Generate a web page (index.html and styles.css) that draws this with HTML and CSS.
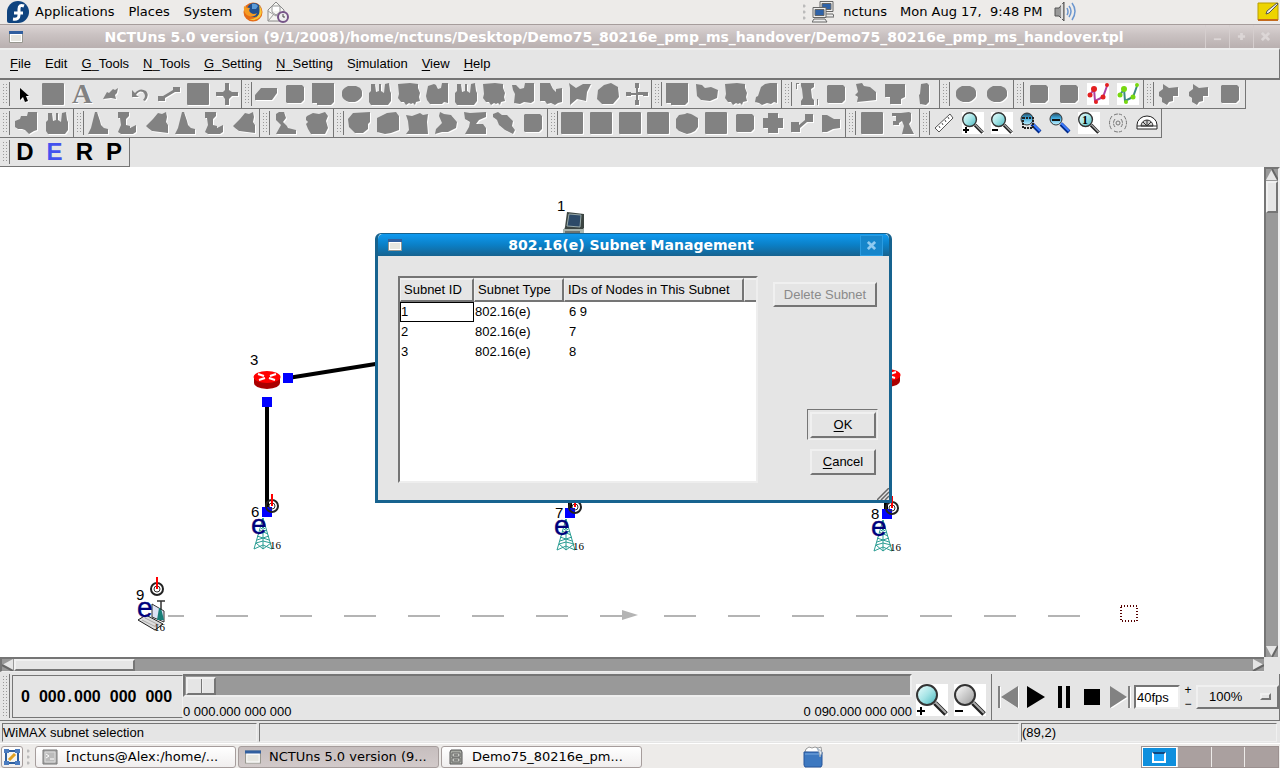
FILE: index.html
```html
<!DOCTYPE html>
<html lang="en">
<head>
<meta charset="utf-8">
<title>NCTUns 5.0</title>
<link rel="stylesheet" href="styles.css">
</head>
<body>
<svg class="defs" aria-hidden="true">
  <defs>
    <linearGradient id="glass" x1="0" y1="0" x2="1" y2="1"><stop offset="0" stop-color="#f0ffff"/><stop offset=".5" stop-color="#a5e4e6"/><stop offset="1" stop-color="#45b4bb"/></linearGradient>
    <linearGradient id="glassgray" x1="0" y1="0" x2="1" y2="1"><stop offset="0" stop-color="#fff"/><stop offset=".5" stop-color="#ccc"/><stop offset="1" stop-color="#999"/></linearGradient>
    <linearGradient id="glassblue" x1="0" y1="0" x2="0" y2="1"><stop offset="0" stop-color="#27485c"/><stop offset=".4" stop-color="#3ba4d8"/><stop offset="1" stop-color="#c5f4ff"/></linearGradient>
  </defs>
  <symbol id="sq" viewBox="0 0 22 22"><rect width="22" height="22" rx="1"/></symbol>
  <symbol id="sm" viewBox="0 0 22 22"><path d="M2 3l1-1h15l2 2v13l-3 3H3l-1-1z"/></symbol>
  <symbol id="arrow" viewBox="0 0 22 22"><path fill="#000" d="M7 5v12l3-3 2 5 3-1-2-5h3z"/></symbol>
  <symbol id="pencil" viewBox="0 0 22 22"><path d="M3 16l4-7 2 1 4-4 2 1 3-2-1 5-2 2 1 4-5-1z"/></symbol>
  <symbol id="undo" viewBox="0 0 22 22"><path d="M3 7v7h7l-3-2q3-5 7-3 4 4 0 8l2 1q5-6 1-10-6-4-11 2z"/></symbol>
  <symbol id="link" viewBox="0 0 22 22"><path d="M0 13h5l10-6V4h7v5h-5L7 15v3H0z"/></symbol>
  <symbol id="cross" viewBox="0 0 22 22"><path d="M9 0h4v7l3 2h6v4h-6l-3 3v6H9v-6l-2-3H0V9h7l2-2z"/></symbol>
  <symbol id="thin" viewBox="0 0 22 22"><path d="M9 0h4v5h-1v4h5V9h5v4h-5v-1h-5v5h1v5H9v-5h1v-5H5v1H0V9h5v1h5V5H9z"/></symbol>
  <symbol id="para" viewBox="0 0 22 22"><path d="M0 17v-5l6-7h16v5l-5 7z"/></symbol>
  <symbol id="block" viewBox="0 0 22 22"><path d="M0 1h4V0h15v1h3v15l-3 1v5H6v-5H1z"/></symbol>
  <symbol id="ell" viewBox="0 0 22 22"><path d="M1 9q0-3 6-6h8q6 2 6 6v4q-2 4-7 6H8q-6-2-7-6z"/></symbol>
  <symbol id="full" viewBox="0 0 22 22"><path d="M0 0h22v19l-3 3H5v-2H0z"/></symbol>
  <symbol id="fact" viewBox="0 0 22 22"><path d="M0 10l2-2V1h4l1 8 3-1V1h2v7l3 2 1-9 4-1 1 8 1 2v8l-3 4H2l-2-3z"/></symbol>
  <symbol id="rag" viewBox="0 0 22 22"><path d="M0 1l12-1 8 1v4l2 5-1 4 1 4-4 1-1 3-2-2-2 1-2-1-3 2-2-3H3l-3-4 1-4z"/></symbol>
  <symbol id="notch" viewBox="0 0 22 22"><path d="M2 3l6-2 2 1 2 4 3-1 1-5h6v20l-4-1-2 2H4l-3-4-1-4z"/></symbol>
  <symbol id="notchl" viewBox="0 0 22 22"><path d="M0 2h4l4 4 4-1 1-5h9v18l-3 2-7-1-4 2-6-1 1-9-2-4z"/></symbol>
  <symbol id="notchr" viewBox="0 0 22 22"><path d="M0 0h10l3 6 3 3v-3l6-1v14l-4 1-3 2-4-2-4 1-2-3H0z"/></symbol>
  <symbol id="em" viewBox="0 0 22 22"><path d="M0 0l7 5 7-4h8l-4 8-1 9-9-2-7 6V5z"/></symbol>
  <symbol id="circ" viewBox="0 0 22 22"><path d="M7 2l7-2 7 4 1 10-6 7H5l-5-5 1-9z"/></symbol>
  <symbol id="bean" viewBox="0 0 22 22"><path d="M0 1l6 1 3 3 6-1 7 3-1 8-7 3-9-1-4-4z"/></symbol>
  <symbol id="round" viewBox="0 0 22 22"><path d="M6 4l4-3 5-1h7v20l-3-1-3 2-4-1-5 2-3-2-4-1 1-5 2-1z"/></symbol>
  <symbol id="roller" viewBox="0 0 22 22"><path d="M0 1h3V0H0zM0 1h1v5H0zM5 0h13v4l-3 2 1 9 2 2v5H5v-4l2-3-1-9-1-3zM21 16h1v6h-1z"/></symbol>
  <symbol id="pot" viewBox="0 0 22 22"><path d="M1 1l6-1 2 3 6 1 6 5v8l-9 1-10 1 1-5-3-2 3-3z"/></symbol>
  <symbol id="tee" viewBox="0 0 22 22"><path d="M1 1h20v13l-4 2v5H6v-7H1z"/></symbol>
  <symbol id="slim" viewBox="0 0 22 22"><path d="M8 1l6-1 2 2v17l-3 3-6-1-1-9 1-1z"/></symbol>
  <symbol id="splat" viewBox="0 0 22 22"><path d="M1 9l4-3V1l6 4 9-1v9h-5v5l-4 1-2 3-5-3v-4l-3-2z"/></symbol>
  <symbol id="flag" viewBox="0 0 22 22"><path d="M0 9l5-2 1-3h6l1-4h9v18l-3 1-5 3-4-4-3-1H3l-3-2z"/></symbol>
  <symbol id="cone" viewBox="0 0 22 22"><path d="M7 0h2l3 9 1 4 3 3 4 1v5H0l3-6z"/></symbol>
  <symbol id="ped" viewBox="0 0 22 22"><path d="M1 0h11v4l-3 3v6l4 1v2l6-3v7l-3 2H4l-3-2 3-7-1-7H1z"/></symbol>
  <symbol id="fan" viewBox="0 0 22 22"><path d="M0 14l7-7 5-6 4 1 4-2 1 5-1 5 2 3v8l-8-1-8-1-4-3z"/></symbol>
  <symbol id="lamp" viewBox="0 0 22 22"><path d="M4 0h5l2 6-3 4 4 4 1 2 8 2v4H1l5-9-5-5V2z"/></symbol>
  <symbol id="crown" viewBox="0 0 22 22"><path d="M1 4l6-3 6 1 6-2 3 4-2 5 2 7-3 6H5l-3-5-2-5 2-2-3-3z"/></symbol>
  <symbol id="shield" viewBox="0 0 22 22"><path d="M0 7l5-6 17-1v10l-2 2v5l-5 4H7l-6-6z"/></symbol>
  <symbol id="hex" viewBox="0 0 22 22"><path d="M0 6l10-5 9-1 3 4v14l-8 3-6 1-8-2z"/></symbol>
  <symbol id="jag" viewBox="0 0 22 22"><path d="M0 3l6 1 8-3 3 2 5-1-1 8 1 12H0l3-4-1-9z"/></symbol>
  <symbol id="chev" viewBox="0 0 22 22"><path d="M5 0l4 2 7 1 6 7-1 6-8 4H7l-7 2 1-5 6-6-3-7z"/></symbol>
  <symbol id="zed" viewBox="0 0 22 22"><path d="M0 0l6 1 16-1v5l-7 3-3 4h7l3 4v6H1l4-7 1-5-5-3z"/></symbol>
  <symbol id="slug" viewBox="0 0 22 22"><path d="M0 2l5-2 4 3h5l6 6-1 5 3 4-2 4-8-4-6-5-2-5-4-3z"/></symbol>
  <symbol id="gear" viewBox="0 0 22 22"><path d="M3 3l6-1 2-1 4 1 2 1 5 3v9l-3 4-4 2-4 1-3-1-5-2-3-3V7z"/></symbol>
  <symbol id="plus" viewBox="0 0 22 22"><path d="M6 1h10v5h5v10h-5v5H6v-5H1V6h5z"/></symbol>
  <symbol id="zig" viewBox="0 0 22 22"><path d="M0 10h8v3l6-5V2h8v8h-6l-7 6v4H0z"/></symbol>
  <symbol id="horn" viewBox="0 0 22 22"><path d="M2 3h5l7 4h6v9l-7 1-6 3H2z"/></symbol>
  <symbol id="tripod" viewBox="0 0 22 22"><path d="M0 1h9l8-1 2 1v8l-2 3 5 10H10l2-8-2-5-3 2v2H1V9h3V4H0z"/></symbol>
  <symbol id="mag" viewBox="0 0 32 32"><path fill="#fff" d="M0 0h32v32H0z"/><path d="M19 19l11 11" stroke="#222" stroke-width="5"/><path d="M19 18l11 11" stroke="#aaa" stroke-width="2"/><circle cx="11" cy="11" r="10" fill="url(#glass)" stroke="#333" stroke-width="2"/></symbol>
  <symbol id="maggray" viewBox="0 0 32 32"><path fill="#fff" d="M0 0h32v32H0z"/><path d="M19 19l11 11" stroke="#222" stroke-width="5"/><path d="M19 18l11 11" stroke="#aaa" stroke-width="2"/><circle cx="11" cy="11" r="10" fill="url(#glassgray)" stroke="#333" stroke-width="2"/></symbol>
  <symbol id="magblue" viewBox="0 0 22 22"><path d="M12 12l8 8" stroke="#002a8a" stroke-width="4"/><path d="M12 11l8 8" stroke="#3d7cff" stroke-width="2"/><circle cx="7" cy="7" r="6" fill="url(#glassblue)" stroke="#333"/></symbol>
  <symbol id="win" viewBox="0 0 14 12"><path fill="#fff" stroke="#999890" d="M.5.5h13v11H.5z"/><path fill="#e6e6e0" d="M2 4h10v6H2z"/><path fill="#315f9f" d="M0 0h14v3H0z"/></symbol>
</svg>

<header class="panel">
  <svg class="logo" viewBox="0 0 22 22" aria-label="Fedora"><path fill="#10447f" d="M11 0a11 11 0 1 1 0 22H2q-2 0-2-2v-9A11 11 0 0 1 11 0z"/><path d="M17 5q-5-2-5 3v6q0 5-6 4M7 12h9" fill="none" stroke="#fff" stroke-width="3"/></svg>
  <nav class="panel-menu"><a href="#">Applications</a><a href="#">Places</a><a href="#">System</a></nav>
  <svg class="ico20" viewBox="0 0 20 20" aria-label="Firefox"><circle cx="10" cy="10" r="9.5" fill="#e56a15"/><circle cx="11" cy="8" r="7" fill="#22508e"/><path d="M9 2q4-1 6 2l-2 3-4 0z" fill="#5b9bd8"/><path d="M1 4q2 2 6 2-2 3 1 5 3 2 6 0-2 5-8 3-6-2-5-10z" fill="#f59a22"/><path d="M16 3q5 6 1 12-5 5-11 2 8 0 10-5 1-4 0-9z" fill="#f7c63a"/></svg>
  <svg class="ico22" viewBox="0 0 22 22" aria-label="Mail"><path d="M1 9l8-8 8 8v11H1z" fill="#f5f5f2" stroke="#888"/><path d="M1 10l8 5 8-5M1 20l6-7M5 5h8v6l-4 3-4-3z" fill="#fff" stroke="#999"/><circle cx="16" cy="16" r="5" fill="#eee" stroke="#765488" stroke-width="2"/><path d="M16 13v3h2" stroke="#444" fill="none"/></svg>
  <span class="grow"></span>
  <i class="dots"></i>
  <svg class="ico22 net" viewBox="0 0 22 22" aria-label="Network"><g stroke="#666"><path fill="#eee" d="M8 .5h13v10H8zM10 13h11l1 3H10z"/><path fill="#2e62a8" d="M10 2.500h9v6h-9z"/><path fill="#eee" d="M1 6.500h13v10H1zM2 18h11l2 3H0z"/><path fill="#2e62a8" d="M3 8.500h9v6H3z"/></g></svg>
  <span class="user">nctuns</span>
  <time class="clock">Mon Aug 17,&nbsp; 9:48 PM</time>
  <svg class="ico22" viewBox="0 0 22 22" aria-label="Volume"><path d="M1 7h4l5-6v19l-5-5H1z" fill="#999" stroke="#555"/><path d="M8 3v15" stroke="#ddd" stroke-width="2"/><path d="M13 7q2 4 0 7M15 5q4 5 0 11M18 2q6 8 0 17" fill="none" stroke="#6b96cf" stroke-width="1.500"/></svg>
  <span class="grow2"></span>
  <svg class="ico22 note" viewBox="0 0 22 20" aria-label="Notes"><path d="M1 1h20v17H1z" fill="#edd400" stroke="#b99d00"/><path d="M1 17h20v2H1z" fill="#c46a1d"/><path d="M9 12l1-3 10-8 1 1-9 9z" fill="#eee" stroke="#555"/></svg>
</header>

<div class="titlebar">
  <svg class="winico" viewBox="0 0 14 12"><use href="#win"/></svg>
  <h1>NCTUns 5.0 version (9/1/2008)/home/nctuns/Desktop/Demo75_80216e_pmp_ms_handover/Demo75_80216e_pmp_ms_handover.tpl</h1>
  <div class="wbtns">
    <button aria-label="Minimize"><svg viewBox="0 0 10 10"><path d="M1 8h8" stroke-width="2"/></svg></button>
    <button aria-label="Maximize"><svg viewBox="0 0 10 10"><path d="M5 1v8M1 5h8" stroke-width="3"/></svg></button>
    <button aria-label="Close"><svg viewBox="0 0 10 10"><path d="M1 1l8 8M9 1L1 9" stroke-width="3"/></svg></button>
  </div>
</div>

<nav class="menubar">
  <a href="#"><u>F</u>ile</a><a href="#">Edit</a><a href="#"><u>G</u>_Tools</a><a href="#"><u>N</u>_Tools</a><a href="#"><u>G</u>_Setting</a><a href="#"><u>N</u>_Setting</a><a href="#">S<u>i</u>mulation</a><a href="#"><u>V</u>iew</a><a href="#"><u>H</u>elp</a>
</nav>

<div class="toolbar">
  <div class="tg n8"><i class="grip"></i>
    <button><svg><use href="#arrow"/></svg></button><button><svg><use href="#sq"/></svg></button><button class="letter-a">A</button><button><svg><use href="#pencil"/></svg></button><button><svg><use href="#undo"/></svg></button><button><svg><use href="#link"/></svg></button><button><svg><use href="#sq"/></svg></button><button><svg><use href="#cross"/></svg></button></div>
  <div class="tg n14"><i class="grip"></i>
    <button><svg><use href="#para"/></svg></button><button><svg><use href="#sm"/></svg></button><button><svg><use href="#full"/></svg></button><button><svg><use href="#ell"/></svg></button><button><svg><use href="#fact"/></svg></button><button><svg><use href="#rag"/></svg></button><button><svg><use href="#notch"/></svg></button><button><svg><use href="#fact"/></svg></button><button><svg><use href="#rag"/></svg></button><button><svg><use href="#notchl"/></svg></button><button><svg><use href="#notchr"/></svg></button><button><svg><use href="#em"/></svg></button><button><svg><use href="#circ"/></svg></button><button><svg><use href="#thin"/></svg></button></div>
  <div class="tg n4"><i class="grip"></i>
    <button><svg><use href="#full"/></svg></button><button><svg><use href="#bean"/></svg></button><button><svg><use href="#rag"/></svg></button><button><svg><use href="#round"/></svg></button></div>
  <div class="tg n5"><i class="grip"></i>
    <button><svg><use href="#roller"/></svg></button><button><svg><use href="#sm"/></svg></button><button><svg><use href="#pot"/></svg></button><button><svg><use href="#tee"/></svg></button><button><svg><use href="#slim"/></svg></button></div>
  <div class="tg n2"><i class="grip"></i>
    <button><svg><use href="#ell"/></svg></button><button><svg><use href="#ell"/></svg></button></div>
  <div class="tg n4"><i class="grip"></i>
    <button><svg><use href="#sm"/></svg></button><button><svg><use href="#sm"/></svg></button>
    <button><svg class="plain" viewBox="0 0 22 22"><path fill="#fff" d="M0 0h22v22H0z"/><path d="M3 12l4-6 1 12 8-4 4-11" fill="none" stroke="#b040a0" stroke-width="2"/><g fill="#e32020"><circle cx="7" cy="6" r="3"/><circle cx="3" cy="12" r="2.500"/><circle cx="9" cy="19" r="2"/><circle cx="16" cy="14" r="2.500"/><circle cx="20" cy="2" r="2"/></g></svg></button>
    <button><svg class="plain" viewBox="0 0 22 22"><path fill="#fff" d="M0 0h22v22H0z"/><path d="M3 12l4-6 1 12 8-4 4-11" fill="none" stroke="#3d8a80" stroke-width="2"/><g fill="#78d810"><circle cx="7" cy="6" r="3"/><circle cx="3" cy="12" r="2.500"/><circle cx="9" cy="19" r="2"/><circle cx="16" cy="14" r="2.500"/><circle cx="20" cy="2" r="2"/></g></svg></button></div>
  <div class="tg n3"><i class="grip"></i>
    <button><svg><use href="#splat"/></svg></button><button><svg><use href="#splat"/></svg></button><button><svg><use href="#sm"/></svg></button></div>
</div>

<div class="toolbar">
  <div class="tg n2"><i class="grip"></i>
    <button><svg><use href="#flag"/></svg></button><button><svg><use href="#fact"/></svg></button></div>
  <div class="tg n6"><i class="grip"></i>
    <button><svg><use href="#cone"/></svg></button><button><svg><use href="#ped"/></svg></button><button><svg><use href="#fan"/></svg></button><button><svg><use href="#cone"/></svg></button><button><svg><use href="#ped"/></svg></button><button><svg><use href="#fan"/></svg></button></div>
  <div class="tg n2"><i class="grip"></i>
    <button><svg><use href="#lamp"/></svg></button><button><svg><use href="#crown"/></svg></button></div>
  <div class="tg n7"><i class="grip"></i>
    <button><svg><use href="#shield"/></svg></button><button><svg><use href="#hex"/></svg></button><button><svg><use href="#jag"/></svg></button><button><svg><use href="#chev"/></svg></button><button><svg><use href="#zed"/></svg></button><button><svg><use href="#slug"/></svg></button><button><svg><use href="#sm"/></svg></button></div>
  <div class="tg n10"><i class="grip"></i>
    <button><svg><use href="#sq"/></svg></button><button><svg><use href="#sq"/></svg></button><button><svg><use href="#sq"/></svg></button><button><svg><use href="#sq"/></svg></button><button><svg><use href="#gear"/></svg></button><button><svg><use href="#sq"/></svg></button><button><svg><use href="#sm"/></svg></button><button><svg><use href="#plus"/></svg></button><button><svg><use href="#zig"/></svg></button><button><svg><use href="#horn"/></svg></button></div>
  <div class="tg n2"><i class="grip"></i>
    <button><svg><use href="#sq"/></svg></button><button><svg><use href="#tripod"/></svg></button></div>
  <div class="tg n8"><i class="grip"></i>
    <button><svg class="plain" viewBox="0 0 22 22"><path d="M2 16L17 2l3 4L6 20z" fill="#fff" stroke="#555"/><path d="M6 14l1 2M9 11l1 2M12 8l1 2M15 5l1 2" stroke="#555"/></svg></button>
    <button><svg class="plain" viewBox="0 0 22 22"><use href="#mag"/><path d="M1 18h6M4 15v6" stroke="#000" stroke-width="2"/></svg></button>
    <button><svg class="plain" viewBox="0 0 22 22"><use href="#mag"/><path d="M1 18h6" stroke="#000" stroke-width="2"/></svg></button>
    <button><svg class="plain" viewBox="0 0 22 22"><use href="#magblue"/><path d="M3 6h10v10H3z" fill="none" stroke="#222" stroke-width="2" stroke-dasharray="2 1"/></svg></button>
    <button><svg class="plain" viewBox="0 0 22 22"><use href="#magblue"/><path d="M3 8h8" stroke="#111" stroke-width="2"/></svg></button>
    <button><svg class="plain" viewBox="0 0 22 22"><use href="#mag"/><text x="4" y="12" class="one">1</text></svg></button>
    <button><svg class="plain" viewBox="0 0 22 22"><g fill="none" stroke="#777"><path d="M5 4q-5 7 0 14M8 7q-3 4 0 8M17 4q5 7 0 14M14 7q3 4 0 8M7 3q4-2 8 0M7 19q4 2 8 0" stroke-dasharray="4 1"/><circle cx="11" cy="11" r="2"/></g></svg></button>
    <button><svg class="plain" viewBox="0 0 22 22"><path d="M1 17V13A10 9 0 0 1 21 13v4z" fill="#fff" stroke="#222"/><path d="M5 14a6 6 0 0 1 12 0z" fill="#ccc" stroke="#333"/><path d="M11 14V8M11 14L7 10M11 14l4-4M1 14h20" stroke="#333"/></svg></button></div>
</div>

<div class="toolbar">
  <div class="tg n4 modes"><i class="grip"></i><button>D</button><button class="on">E</button><button>R</button><button>P</button></div>
</div>

<main class="workspace">
  <div class="canvas">
    <svg class="net-canvas" viewBox="0 167 1264 490" width="1264" height="490">
      <g stroke="#000" stroke-width="4"><path d="M288 378l100-16M267 402v108M570 440v73M886 440v74"/></g>
      <g fill="#00f"><path d="M283 373h10v10h-10zM262 397h10v10h-10z"/></g>
      <g id="router"><path d="M254 378v5q0 5 13 6 13-1 13-6v-5z" fill="#a00"/><ellipse cx="267" cy="377" rx="13.500" ry="6" fill="#f00"/><path d="M258 374l6 2M276 374l-6 2M259 380l6-2M275 380l-6-2" stroke="#fff" stroke-width="2"/></g>
      <use href="#router" x="620" y="-2"/>
      <g id="station">
        <path d="M262 507h10v10h-10z" fill="#00f"/>
        <circle cx="272" cy="506" r="6" fill="none" stroke="#222" stroke-width="2"/><circle cx="272" cy="506" r="3" fill="none" stroke="#333"/><path d="M272 494v12" stroke="#f00" stroke-width="2"/>
        <path d="M263 518l-9 31M263 518l9 31M263 518v31M261 525l4 4M265 525l-4 4M259 530l9 4M267 530l-9 4M257 536l12 4M269 536l-12 4M256 543l7 6 8-6-8-2zM254 549l9-4 9 4" fill="none" stroke="#2a9d93"/>
        <text class="e" x="251" y="534">e</text><text class="sixteen" x="270" y="549">16</text>
      </g>
      <use href="#station" x="303" y="1"/><use href="#station" x="620" y="2"/>
      <g class="id"><text x="557" y="211">1</text><text x="250" y="365">3</text><text x="251" y="517">6</text><text x="555" y="518">7</text><text x="871" y="519">8</text><text x="136" y="600">9</text></g>
      <g><path d="M567 212l17 2v14l-4 5h-17l2-6z" fill="#3c4542"/><path d="M569 214l12 1-1 12-13-1z" fill="#2d4a68" stroke="#9aa"/><path d="M563 229h21v8h-21z" fill="#a9b5af"/><path d="M565 232h15" stroke="#333"/></g>
      <g><circle cx="157" cy="589" r="6" fill="none" stroke="#222" stroke-width="2"/><circle cx="157" cy="589" r="3" fill="none" stroke="#333"/><path d="M157 577v12" stroke="#f00" stroke-width="2"/>
      <path d="M152 604l12 7v11l-12-5z" fill="#dde3f5" stroke="#333"/><path d="M138 620l8-5 17 9-8 6z" fill="#ddd" stroke="#222"/><path d="M142 620l14 7M145 618l14 7" stroke="#aaa"/><path d="M159 608l-2 12h7l-3-12z" fill="#187f78"/><path d="M161 601v9M157 601h8" stroke="#333" stroke-width="1.500"/>
      <text class="e" x="137" y="617">e</text><text class="sixteen" x="154" y="631">16</text></g>
      <path d="M168 616h16M216 616h864" stroke="#b4b4b4" stroke-width="2" stroke-dasharray="32 32"/>
      <path d="M622 610l16 5-16 5z" fill="#b4b4b4"/>
      <rect x="1121" y="606" width="16" height="15" fill="none" stroke="#500" stroke-width="2" stroke-dasharray="1 2"/>
    </svg>
  </div>
  <div class="vscroll">
    <svg class="sarrow" viewBox="0 0 12 12"><path d="M6 0L0 11h12z"/><path class="shade" d="M6 0l6 11"/></svg>
    <div class="thumb"></div><span class="grow"></span>
    <svg class="sarrow" viewBox="0 0 12 12"><path d="M6 12L0 1h12z"/><path class="shade" d="M6 12l6-11"/></svg>
  </div>
  <div class="hscroll">
    <svg class="sarrow" viewBox="0 0 12 12"><path d="M0 6L11 0v12z"/><path class="shade" d="M0 6l11 6"/></svg>
    <div class="thumb"></div><span class="grow"></span>
    <svg class="sarrow" viewBox="0 0 12 12"><path d="M12 6L1 0v12z"/><path class="shade" d="M12 6L1 12"/></svg>
  </div>

  <section class="dialog" role="dialog" aria-labelledby="dt">
    <div class="dtitle">
      <svg class="winico" viewBox="0 0 14 12"><use href="#win"/></svg><h2 id="dt">802.16(e) Subnet Management</h2>
      <button aria-label="Close dialog"><svg viewBox="0 0 10 10"><path d="M1 1l8 8M9 1L1 9" stroke-width="3"/></svg></button>
    </div>
    <div class="dbody">
      <div class="tablebox">
        <table>
          <colgroup><col class="c1"><col class="c2"><col class="c3"><col></colgroup>
          <thead><tr><th>Subnet ID</th><th>Subnet Type</th><th>IDs of Nodes in This Subnet</th><th></th></tr></thead>
          <tbody>
            <tr><td class="cur">1</td><td>802.16(e)</td><td>6 9</td><td></td></tr>
            <tr><td>2</td><td>802.16(e)</td><td>7</td><td></td></tr>
            <tr><td>3</td><td>802.16(e)</td><td>8</td><td></td></tr>
          </tbody>
        </table>
      </div>
      <div class="dside">
        <button class="btn" disabled>Delete Subnet</button>
        <span class="grow"></span>
        <span class="default"><button class="btn small"><u>O</u>K</button></span>
        <button class="btn small cancel"><u>C</u>ancel</button>
      </div>
    </div>
    <svg class="sizegrip" viewBox="0 0 12 12"><path d="M0 12L12 0M4 12l8-8M8 12l4-4" stroke="#666" stroke-width="1.500"/></svg>
  </section>
</main>

<footer class="player">
  <i class="grip"></i>
  <output class="lcd"><span>0</span><span>000</span><span class="pt">.</span><span>000</span><span>000</span><span>000</span></output>
  <div class="timeline">
    <input type="range" min="0" max="90" value="0" aria-label="Time">
    <div class="times"><span>0 000.000 000 000</span><span>0 090.000 000 000</span></div>
  </div>
  <div class="zooms">
    <button aria-label="Zoom in time"><svg viewBox="0 0 32 32"><use href="#mag"/><path d="M1 27h8M5 23v8" stroke="#000" stroke-width="2"/></svg></button>
    <button aria-label="Zoom out time"><svg viewBox="0 0 32 32"><use href="#maggray"/><path d="M1 27h8" stroke="#000" stroke-width="2"/></svg></button>
  </div>
  <div class="controls">
    <button aria-label="First"><svg viewBox="0 0 22 22"><path class="dis" d="M1 0h2v22H1zM21 0v22L4 11z"/></svg></button>
    <button aria-label="Play"><svg viewBox="0 0 22 22"><path d="M2 0v22l18-11z"/></svg></button>
    <button aria-label="Pause"><svg viewBox="0 0 22 22"><path d="M5 0h4v22H5zM13 0h4v22h-4z"/></svg></button>
    <button aria-label="Stop"><svg viewBox="0 0 22 22"><path d="M3 3h16v16H3z"/></svg></button>
    <button aria-label="Last"><svg viewBox="0 0 22 22"><path class="dis" d="M19 0h2v22h-2zM1 0v22l17-11z"/></svg></button>
    <input class="fps" value="40fps" aria-label="Frame rate">
    <span class="spin"><button>+</button><button>−</button></span>
    <span class="selwrap"><select aria-label="Speed"><option>100%</option></select><i></i></span>
  </div>
</footer>

<div class="status"><span class="s1">WiMAX subnet selection</span><span class="s2"></span><span class="s3">(89,2)</span></div>

<footer class="taskbar">
  <button class="task desk" aria-label="Show desktop"><svg class="ico16" viewBox="0 0 16 16"><path fill="#f4f4f0" stroke="#2e5f9f" stroke-width="2" d="M2 2h12v12H2z"/><path d="M0 0h5v4H0zM11 0h5v4h-5zM0 12h5v4H0zM11 12h5v4h-5z" fill="#4b7cc0"/><path d="M5 11l6-6" stroke="#e0a020" stroke-width="3"/></svg></button>
  <i class="dots"></i>
  <button class="task"><svg class="ico16" viewBox="0 0 16 16"><path fill="#aaa" stroke="#777" d="M1 1h14v14H1z"/><path fill="#bbb" stroke="#ddd" d="M3 3h10v10H3z"/><path d="M4 5l3 2-3 2M8 10h4" stroke="#fff" fill="none"/></svg><span>[nctuns@Alex:/home/...</span></button>
  <button class="task active"><svg class="ico16" viewBox="0 -1 14 14"><use href="#win" width="14" height="12"/></svg><span>NCTUns 5.0 version (9...</span></button>
  <button class="task"><svg class="ico16" viewBox="0 0 16 16"><path fill="#a7aaa3" stroke="#555" d="M2 3l1-2h10l1 2v12H2z"/><path fill="#c8cac4" stroke="#666" d="M4 4h8v4H4zM4 9h8v4H4z"/><path d="M6 6h4M6 11h4" stroke="#444"/></svg><span>Demo75_80216e_pm...</span></button>
  <span class="grow"></span>
  <svg class="ico22" viewBox="0 0 22 22" aria-label="Files"><path d="M3 6l1-3 3-2 3 1 3-1 3 1 3-1 1 7z" fill="#fff" stroke="#999"/><path d="M2 6h18v13l-1 2H3l-1-2z" fill="#3d78c0" stroke="#27549a"/><path d="M3 8h15" stroke="#7ba9e0"/><path d="M15 2l5 4-2 5-1-5z" fill="#e9edf3" stroke="#9ab"/></svg>
  <span class="grow double"></span>
  <div class="pager"><button class="here" aria-label="Workspace 1"><i></i></button><button aria-label="Workspace 2"></button><button aria-label="Workspace 3"></button><button aria-label="Workspace 4"></button></div>
</footer>
</body>
</html>
```

FILE: styles.css
```css
* { box-sizing: border-box; }
body {
  margin: 0; min-height: 100vh; display: flex; flex-direction: column;
  background: #e5e5e5; color: #000;
  font: 13px/16px "Liberation Sans", Arial, sans-serif;
}
button { margin: 0; padding: 0; border: 0; background: none; font: inherit; color: inherit; }
a { color: inherit; text-decoration: none; }
svg { display: block; flex: none; }
u { text-underline-offset: 2px; }
.defs { position: absolute; width: 0; height: 0; }
.grow { flex: 1; }
.double { flex: 2; }
.ico16 { width: 16px; height: 16px; }
.ico20 { width: 20px; height: 20px; }
.ico22 { width: 22px; height: 22px; }
.dots { width: 3px; height: 16px; flex: none; background: radial-gradient(circle at 1px 2px, #bbb 1px, transparent 2px) 0 0 / 3px 6px; }

/* desktop panel */
.panel {
  display: flex; align-items: center; height: 25px; padding: 0 1px 1px 7px;
  background: #edebe9; border-bottom: 1px solid #a69d9c;
  font-family: "DejaVu Sans", sans-serif;
}
.logo { width: 22px; height: 22px; margin-right: 6px; }
.panel-menu { display: flex; gap: 14px; margin-right: 11px; }
.panel .ico20 { margin-right: 4px; }
.panel .net { margin: 0 9px 0 6px; }
.user { margin-right: 13px; }
.clock { margin-right: 12px; }
.grow2 { width: 14.2%; flex: none; }
.note { height: 20px; }

/* window title */
.titlebar {
  display: flex; align-items: center; height: 23px; padding-left: 9px;
  background: linear-gradient(#dbd4d4, #cbc3c3 40%, #b9b0b0);
  font-family: "DejaVu Sans", sans-serif;
}
.winico { width: 14px; height: 12px; }
h1, h2 { margin: 0; flex: 1; text-align: center; font: bold 14px/20px "DejaVu Sans", sans-serif; color: #fff; white-space: nowrap; }
.wbtns { display: flex; align-self: stretch; width: 75px; }
.wbtns button { width: 24px; border-left: 1px solid #d5cece; display: grid; place-items: center; }
.wbtns svg, .dtitle button svg { width: 9px; height: 9px; stroke: #dcd6d6; fill: none; }

/* menu */
.menubar {
  display: flex; align-items: center; gap: 14px; height: 32px; padding: 0 10px;
  border-top: 2px solid #eee; border-right: 1px solid #757575; border-bottom: 2px solid #757575;
}

/* tool bars */
.toolbar { display: flex; height: 29px; }
.tg {
  display: flex; align-items: stretch; flex: none;
  border-bottom: 1px solid #757575; border-right: 1px solid #757575;
}
.n2 { width: 74px; } .n3 { width: 102px; } .n4 { width: 130px; } .n5 { width: 158px; }
.n6 { width: 186px; } .n7 { width: 214px; } .n8 { width: 242px; } .n10 { width: 298px; } .n14 { width: 410px; }
.grip {
  width: 10px; flex: none; margin: 2px 0; padding: 2px 2px 2px 3px; border-right: 1px solid #757575;
  background: conic-gradient(from 270deg at 1px 1px, #999 90deg, transparent 0) 0 0 / 3px 3px content-box;
}
.tg button { flex: 1; display: grid; place-items: center; }
.tg svg { width: 22px; height: 22px; fill: #828282; filter: drop-shadow(1px 1px 0 #fff); }
.tg svg.plain { filter: none; }
.tg .letter-a { font: bold 28px/24px "Liberation Serif", serif; color: #828282; text-shadow: 1px 1px 0 #fff; }
.one { font: bold 12px "Liberation Serif", serif; fill: #000; }
.modes button { font: bold 24px/26px "Liberation Sans", Arial, sans-serif; }
.modes .on { color: #4452ee; }

/* drawing area */
.workspace {
  position: relative; flex: 1; display: grid;
  grid-template: minmax(490px, 1fr) 15px / minmax(0, 1fr) 16px;
}
.canvas { background: #fff; overflow: hidden; }
.id text { font: 15px "Liberation Sans", Arial, sans-serif; }
.e { font: 28px "Liberation Sans", Arial, sans-serif; fill: #00007c; stroke: #00007c; stroke-width: .4; }
.sixteen { font: 11px "Liberation Serif", serif; fill: #000; }
.vscroll, .hscroll { display: flex; background: #999; border: 0 solid #757575; }
.vscroll { flex-direction: column; border-width: 2px 0 0 2px; border-right: 2px solid #eee; }
.hscroll { border-width: 2px 0 0 2px; border-bottom: 1px solid #eee; }
.thumb { background: #e5e5e5; border: 2px solid; border-color: #f0f0f0 #757575 #757575 #f0f0f0; }
.vscroll .thumb { height: 32px; }
.hscroll .thumb { width: 121px; }
.sarrow { width: 12px; height: 12px; fill: #e5e5e5; }
.shade { stroke: #666; stroke-width: 2; }

/* dialog */
.dialog {
  position: absolute; left: 375px; top: 66px; width: 517px; height: 270px;
  display: flex; flex-direction: column;
  background: #e5e5e5; border: 3px solid #17638f; border-top-width: 1px; border-radius: 6px 6px 0 0;
}
.dtitle {
  display: flex; align-items: center; height: 22px; flex: none; padding-left: 10px;
  background: linear-gradient(#0f9af0, #0b7fc6 50%, #17638f); border-radius: 5px 5px 0 0;
}
.dtitle button { width: 23px; height: 21px; margin-right: 6px; background: #1686cb; border: 1px solid #2b9ce0; display: grid; place-items: center; }
.dtitle button svg { stroke: #8fcaf0; }
.dbody { flex: 1; display: flex; gap: 15px; padding: 20px 11px 17px 20px; }
.tablebox { width: 360px; background: #fff; border: 2px solid; border-color: #757575 #eee #eee #757575; }
table { width: 100%; table-layout: fixed; border-collapse: separate; border-spacing: 0; }
.c1 { width: 74px; } .c2 { width: 90px; } .c3 { width: 180px; }
th {
  height: 24px; padding: 0 0 0 3px; text-align: left; font-weight: normal; white-space: nowrap;
  background: #e5e5e5; border: 1px solid; border-width: 2px 2px 2px 1px; border-color: #f0f0f0 #757575 #757575 #f0f0f0;
}
th:last-child { border-right: 0; }
td { height: 20px; padding: 0 1px; }
td:nth-child(3) { padding-left: 5px; }
.cur { outline: 1px solid #000; outline-offset: -1px; }
.dside { flex: 1; display: flex; flex-direction: column; align-items: flex-end; padding: 6px 1px 8px 0; }
.btn { width: 104px; height: 25px; background: #e5e5e5; border: 2px solid; border-color: #f0f0f0 #757575 #757575 #f0f0f0; }
.btn:disabled { color: #8a8a8a; }
.small { width: 66px; height: 26px; }
.default { padding: 2px 1px 1px 2px; margin-right: -1px; border: 1px solid; border-color: #757575 #f0f0f0 #f0f0f0 #757575; }
.cancel { margin: 9px 1px 0 0; }
.sizegrip { position: absolute; right: 0; bottom: 0; width: 12px; height: 12px; }

/* player */
.player { display: flex; height: 49px; border-bottom: 1px solid #757575; }
.lcd {
  display: flex; align-items: center; gap: 9px; width: 171px; margin: 3px 0 2px 2px; padding-left: 8px;
  border: 1px solid; border-color: #757575 #f0f0f0 #757575 #757575;
  font: bold 16px/20px "Liberation Sans", Arial, sans-serif; white-space: nowrap;
}
.lcd .pt { margin: 0 -7px; }
.timeline { flex: 1; margin-top: 2px; display: flex; flex-direction: column; }
.timeline input {
  appearance: none; width: 100%; height: 23px; margin: 0; padding: 0 1px;
  background: #999; border: 2px solid; border-color: #757575 #eee #eee #757575;
}
.timeline input::-webkit-slider-thumb {
  appearance: none; width: 30px; height: 18px; border: 2px solid; border-color: #f0f0f0 #757575 #757575 #f0f0f0;
  background: linear-gradient(90deg, transparent 13px, #757575 13px, #757575 14px, #f0f0f0 14px, #f0f0f0 15px, transparent 15px) #e5e5e5;
}
.times { display: flex; justify-content: space-between; padding-top: 7px; }
.zooms { display: flex; gap: 6px; padding: 8px 5px 0 4px; }
.zooms svg { width: 32px; height: 32px; }
.controls { display: flex; align-items: center; border-left: 1px solid #757575; margin-top: 2px; padding-left: 2px; border-right: 1px solid #757575; }
.controls > button { width: 28px; display: grid; place-items: center; }
.controls > button svg { width: 22px; height: 22px; }
.dis { fill: #828282; filter: drop-shadow(1px 1px 0 #fff); }
.fps { width: 46px; height: 24px; padding: 0 1px; font: inherit; background: #fff; border: 2px solid; border-color: #757575 #eee #eee #757575; }
.spin { display: flex; flex-direction: column; width: 16px; align-items: center; }
.spin button { font-size: 12px; line-height: 14px; height: 14px; }
.selwrap { position: relative; width: 83px; }
.selwrap select { appearance: none; width: 100%; height: 24px; padding-left: 11px; font: inherit; color: #000; background: #e5e5e5; border: 2px solid; border-color: #f0f0f0 #757575 #757575 #f0f0f0; border-radius: 0; }
.selwrap i { position: absolute; right: 8px; top: 8px; width: 11px; height: 7px; border: 2px solid; border-color: #f0f0f0 #757575 #757575 #f0f0f0; pointer-events: none; }

/* status */
.status { display: flex; gap: 2px; height: 22px; padding: 2px 3px 1px 2px; }
.status span { border: 1px solid; border-color: #757575 #f0f0f0 #f0f0f0 #757575; line-height: 18px; }
.s1 { width: 255px; } .s2 { flex: 1; } .s3 { width: 256px; }

/* task bar */
.taskbar { display: flex; align-items: center; gap: 2px; height: 26px; padding: 1px 1px 0; background: #edebe9; border-top: 1px solid #fff; font-family: "DejaVu Sans", sans-serif; }
.task {
  display: flex; align-items: center; gap: 8px; width: 201px; height: 22px; padding: 0 6px; white-space: nowrap;
  background: linear-gradient(#fff, #f0eeee); border: 1px solid #a69d9c; border-radius: 3px;
}
.task.desk { width: 22px; padding: 0 2px; }
.task.active { background: linear-gradient(#c6bebe, #d2caca); }
.taskbar .dots { margin: 0 3px 0 2px; }
.pager { display: flex; width: 138px; height: 22px; border: 1px solid #9c9190; gap: 1px; background: #edebe9; }
.pager button { flex: 1; background: #aaa09f; display: grid; place-items: center; }
.pager .here { background: #0f8fdd; border: 1px solid #fff; }
.pager i { width: 14px; height: 11px; background: #1fa5fa; border: 2px solid #fff; border-top-color: #10477f; }
```
